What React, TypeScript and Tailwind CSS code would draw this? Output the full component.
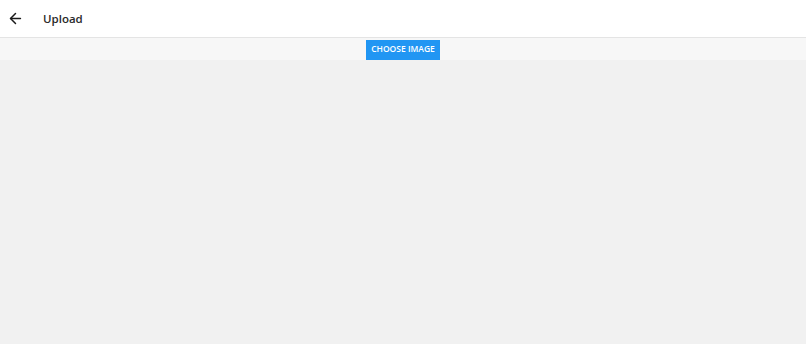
import { ArrowLeft } from "lucide-react"

const App = () => {
  return (
    <div className="flex h-[344px] w-full flex-col bg-[#f1f1f1] font-['Open_Sans',sans-serif]">
      <header className="flex h-[38px] items-center border-b border-[#e4e4e4] bg-white">
        <button className="ml-[7px] flex h-[17px] w-[17px] items-center justify-center text-[#1a1a1a]">
          <ArrowLeft className="h-[17px] w-[17px]" strokeWidth={2.1} />
        </button>
        <h1 className="ml-[19px] text-[11.5px] font-semibold text-[#2a2a2a]">Upload</h1>
      </header>

      <div className="flex h-[22px] items-center justify-center bg-[#f7f7f7] pt-px">
        <button className="flex h-[20px] w-[74px] items-center justify-center bg-[#2196f3] text-[8.5px] font-semibold text-white">
          CHOOSE IMAGE
        </button>
      </div>

      <div className="flex-1" />
    </div>
  )
}

export default App
